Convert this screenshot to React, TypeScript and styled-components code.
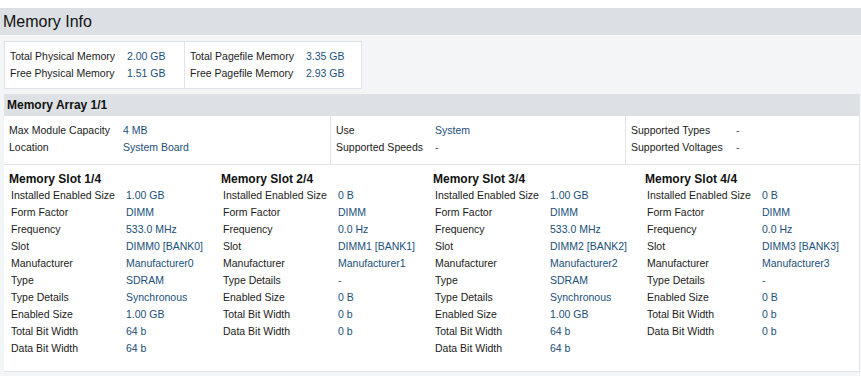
import React from 'react'
import styled, { createGlobalStyle } from 'styled-components'

const GlobalStyle = createGlobalStyle`
  html, body {
    margin: 0;
    padding: 0;
    background: #ffffff;
  }
  body {
    font-family: "Liberation Sans", Arial, sans-serif;
    font-size: 10.5px;
    color: #1b1b1b;
  }
`

const Page = styled.div`
  width: 861px;
  height: 376px;
  padding-top: 8px;
  box-sizing: border-box;
  background: #ffffff;
  overflow: hidden;
`
const TitleBar = styled.div`
  height: 27px;
  background: #dcdfe3;
  display: flex;
  align-items: center;
  padding-left: 3px;
  font-size: 16px;
  color: #111;
`
const Body = styled.div`
  background: #f4f5f7;
  padding: 6px 2px 6px 4px;
  height: 341px;
  box-sizing: border-box;
`
const SummaryBox = styled.div`
  display: inline-grid;
  grid-template-columns: 179px 179px;
  width: 358px;
  background: #fff;
  border: 1px solid #dfe2e6;
  box-sizing: border-box;
`
const SummaryCol = styled.div<{ $labelW: number; $divider?: boolean }>`
  display: grid;
  grid-template-columns: ${p => p.$labelW}px auto;
  padding: 6px 0 6px 5px;
  border-left: ${p => (p.$divider ? '1px solid #e2e4e8' : 'none')};
`
const Label = styled.div`
  height: 17px;
  line-height: 17px;
  white-space: nowrap;
  color: #1b1b1b;
`
const Value = styled.div`
  height: 17px;
  line-height: 17px;
  white-space: nowrap;
  color: #21507a;
`
const Section = styled.div`
  margin-top: 5px;
  width: 855px;
  border-right: 1px solid #e2e5e9;
`
const SectionHeader = styled.div`
  height: 22px;
  background: #dde0e4;
  display: flex;
  align-items: center;
  padding-left: 3px;
  font-weight: bold;
  font-size: 12px;
  color: #111;
`
const ArrayGrid = styled.div`
  display: grid;
  grid-template-columns: 326px 295px auto;
  background: #fff;
  border-bottom: 1px solid #e2e4e8;
`
const ArrayCol = styled.div<{ $labelW: number; $divider?: boolean }>`
  display: grid;
  grid-template-columns: ${p => p.$labelW}px auto;
  align-content: start;
  padding: 6px 0 8px 5px;
  border-left: ${p => (p.$divider ? '1px solid #e2e4e8' : 'none')};
`
const SlotsGrid = styled.div`
  display: grid;
  grid-template-columns: repeat(4, 212px);
  background: #fff;
  padding: 6px 0 14px 5px;
  border-bottom: 1px solid #e2e4e8;
`
const Slot = styled.div`
  display: grid;
  grid-template-columns: 117px auto;
  align-content: start;
`
const SlotTitle = styled.div`
  grid-column: 1 / -1;
  height: 16px;
  line-height: 17px;
  font-weight: bold;
  font-size: 12px;
  color: #111;
`
const SlotLabel = styled(Label)`
  padding-left: 2px;
`

type Pair = [string, string]

const summaryLeft: Pair[] = [
  ['Total Physical Memory', '2.00 GB'],
  ['Free Physical Memory', '1.51 GB'],
]
const summaryRight: Pair[] = [
  ['Total Pagefile Memory', '3.35 GB'],
  ['Free Pagefile Memory', '2.93 GB'],
]

const arrayCols: { labelW: number; rows: Pair[] }[] = [
  { labelW: 114, rows: [['Max Module Capacity', '4 MB'], ['Location', 'System Board']] },
  { labelW: 99, rows: [['Use', 'System'], ['Supported Speeds', '-']] },
  { labelW: 105, rows: [['Supported Types', '-'], ['Supported Voltages', '-']] },
]

const filledSlot = (n: number): Pair[] => [
  ['Installed Enabled Size', '1.00 GB'],
  ['Form Factor', 'DIMM'],
  ['Frequency', '533.0 MHz'],
  ['Slot', `DIMM${n} [BANK${n}]`],
  ['Manufacturer', `Manufacturer${n}`],
  ['Type', 'SDRAM'],
  ['Type Details', 'Synchronous'],
  ['Enabled Size', '1.00 GB'],
  ['Total Bit Width', '64 b'],
  ['Data Bit Width', '64 b'],
]
const emptySlot = (n: number): Pair[] => [
  ['Installed Enabled Size', '0 B'],
  ['Form Factor', 'DIMM'],
  ['Frequency', '0.0 Hz'],
  ['Slot', `DIMM${n} [BANK${n}]`],
  ['Manufacturer', `Manufacturer${n}`],
  ['Type Details', '-'],
  ['Enabled Size', '0 B'],
  ['Total Bit Width', '0 b'],
  ['Data Bit Width', '0 b'],
]

const slots = [filledSlot(0), emptySlot(1), filledSlot(2), emptySlot(3)]

function Rows({ rows, LabelEl = Label }: { rows: Pair[]; LabelEl?: typeof Label }) {
  return (
    <>
      {rows.map(([k, v]) => (
        <React.Fragment key={k}>
          <LabelEl>{k}</LabelEl>
          <Value>{v}</Value>
        </React.Fragment>
      ))}
    </>
  )
}

export default function App() {
  return (
    <Page>
      <GlobalStyle />
      <TitleBar>Memory Info</TitleBar>
      <Body>
        <SummaryBox>
          <SummaryCol $labelW={117}>
            <Rows rows={summaryLeft} />
          </SummaryCol>
          <SummaryCol $divider $labelW={116}>
            <Rows rows={summaryRight} />
          </SummaryCol>
        </SummaryBox>
        <Section>
          <SectionHeader>Memory Array 1/1</SectionHeader>
          <ArrayGrid>
            {arrayCols.map((c, i) => (
              <ArrayCol key={i} $labelW={c.labelW} $divider={i > 0}>
                <Rows rows={c.rows} />
              </ArrayCol>
            ))}
          </ArrayGrid>
          <SlotsGrid>
            {slots.map((rows, i) => (
              <Slot key={i}>
                <SlotTitle>Memory Slot {i + 1}/4</SlotTitle>
                <Rows rows={rows} LabelEl={SlotLabel} />
              </Slot>
            ))}
          </SlotsGrid>
        </Section>
      </Body>
    </Page>
  )
}
